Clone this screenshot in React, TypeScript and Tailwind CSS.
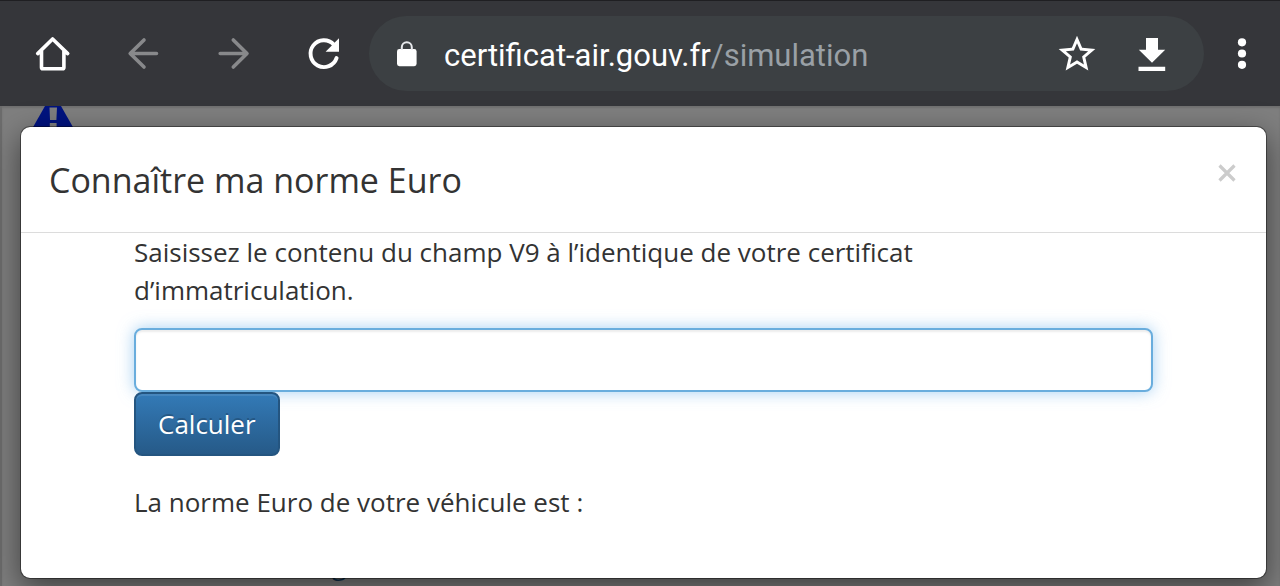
import type { ReactNode } from "react";
import { MdStarBorder } from "react-icons/md";

function ToolButton({ label, children, disabled }: { label: string; children: ReactNode; disabled?: boolean }) {
  return (
    <button
      type="button"
      aria-label={label}
      disabled={disabled}
      className="flex size-[45px] shrink-0 items-center justify-center text-white disabled:text-[#88898b]"
    >
      {children}
    </button>
  );
}

function Glyph({ children }: { children: ReactNode }) {
  return (
    <svg viewBox="0 0 45 45" className="size-[45px]" fill="none" stroke="currentColor" strokeWidth="3.6" strokeLinecap="round" strokeLinejoin="round" aria-hidden="true">
      {children}
    </svg>
  );
}

function BrowserBar() {
  return (
    <header className="flex items-center border-t border-[#1f1f22] bg-[#35363a] pt-[15px] pr-4 pb-[15px] pl-[30px]">
      <nav className="flex gap-[45px]" aria-label="Navigation">
        <ToolButton label="Accueil">
          <Glyph>
            <path d="M7.7 22.6 L22.6 8 L37.7 22.6 M11.5 20 V36.5 Q11.5 37.8 12.8 37.8 H32.6 Q33.9 37.8 33.9 36.5 V20" />
          </Glyph>
        </ToolButton>
        <ToolButton label="Précédent" disabled>
          <Glyph>
            <path d="M36.5 22.5 H10.5 M24 9 L10.2 22.5 L24 36" />
          </Glyph>
        </ToolButton>
        <ToolButton label="Suivant" disabled>
          <Glyph>
            <path d="M10.2 22.5 H36.5 M23.3 9 L37 22.5 L23.3 36" />
          </Glyph>
        </ToolButton>
        <ToolButton label="Actualiser">
          <Glyph>
            <path strokeWidth="3.9" d="M36.6 27 A13.4 13.4 0 1 1 33.8 13.6" />
            <path d="M39 7.3 V20.7 H25.6 Z" fill="currentColor" stroke="none" />
          </Glyph>
        </ToolButton>
      </nav>
      <div className="ml-6 flex h-[75px] min-w-0 flex-1 items-center rounded-full bg-[#3c4043] pr-[30px] pl-[27px]">
        <svg viewBox="0 0 22 28" className="h-7 w-[22px] shrink-0" aria-hidden="true">
          <rect x="1" y="9" width="19.6" height="17.2" rx="2.4" fill="#fff" />
          <path d="M5.8 10 V7.2 A5 5 0 0 1 15.8 7.2 V10" fill="none" stroke="#e8eaed" strokeWidth="2" />
        </svg>
        <p className="ml-[26px] min-w-0 flex-1 truncate pt-1 font-['Roboto',sans-serif] text-[31px] leading-10 text-[#9aa0a6]">
          <span className="text-white">certificat-air.gouv.fr</span>/simulation
        </p>
        <div className="flex gap-[30px]">
          <ToolButton label="Ajouter aux favoris">
            <MdStarBorder className="size-11" />
          </ToolButton>
          <ToolButton label="Télécharger">
            <svg viewBox="0 0 45 45" className="size-[45px]" fill="currentColor" aria-hidden="true">
              <path d="M17 7 H29 V18.7 H36.2 L23 31.8 L9.8 18.7 H17 Z M9.5 35.8 H36.2 V39.9 H9.5 Z" />
            </svg>
          </ToolButton>
        </div>
      </div>
      <div className="ml-[15px] flex">
        <ToolButton label="Menu">
          <svg viewBox="0 0 45 45" className="size-[45px]" fill="currentColor" aria-hidden="true">
            <circle cx="23" cy="11.3" r="4.1" />
            <circle cx="23" cy="22.5" r="4.1" />
            <circle cx="23" cy="33.8" r="4.1" />
          </svg>
        </ToolButton>
      </div>
    </header>
  );
}

function PageBehind() {
  return (
    <div className="col-start-1 row-start-1 flex flex-col justify-between border-l-2 border-[#6c6c6c] bg-[#7f7f7f] shadow-[inset_0_2px_2px_rgba(0,0,0,0.12)]" aria-hidden="true">
      <svg viewBox="0 0 42 23" className="ml-[30px] h-[23px] w-[42px]">
        <path d="M13 0 H29 L42 23 H0 Z" fill="#00137f" />
        <path d="M17.5 1.5 H25 L24.4 14 H18 Z M17.8 17 H24.6 V23 H17.8 Z" fill="#7f7f7f" />
      </svg>
      <p className="ml-[330px] pb-[3px] font-['Open_Sans',sans-serif] text-[26px] leading-9 text-[#0d2f4d]">g</p>
    </div>
  );
}

function NormDialog() {
  return (
    <section
      role="dialog"
      aria-labelledby="dialog-title"
      className="z-10 col-start-1 row-start-1 mt-5 mr-[13px] mb-[7px] ml-5 rounded-[10px] border border-black/40 bg-white bg-clip-padding font-['Open_Sans',sans-serif] text-[#333] shadow-[0_10px_30px_rgba(0,0,0,0.5)]"
    >
      <div className="flex items-start justify-between border-b border-[#dcdcdc] pt-[27px] pr-6 pb-[26px] pl-7">
        <h1 id="dialog-title" className="text-[34px] leading-[52px]">Connaître ma norme Euro</h1>
        <button type="button" aria-label="Fermer" className="mt-2 flex h-[22px] w-[30px] items-center justify-center text-[#ccc]">
          <svg viewBox="0 0 18 18" className="size-[18px]" stroke="currentColor" strokeWidth="3.2" aria-hidden="true">
            <path d="M1.5 1.5 L16.5 16.5 M16.5 1.5 L1.5 16.5" />
          </svg>
        </button>
      </div>
      <form className="px-[113px] pb-14 text-[26px] leading-[38px]" onSubmit={(event) => event.preventDefault()}>
        <label htmlFor="champ-v9" className="block max-w-[860px]">
          Saisissez le contenu du champ V9 à l’identique de votre certificat d’immatriculation.
        </label>
        <input
          id="champ-v9"
          type="text"
          className="mt-[19px] block h-16 w-full rounded-lg border-2 border-[#69addd] bg-white px-6 shadow-[inset_0_2px_2px_rgba(0,0,0,0.075),0_0_16px_rgba(102,175,233,0.6)] outline-none"
        />
        <button
          type="submit"
          className="relative block h-16 rounded-lg border-2 border-[#245580] bg-linear-to-b from-[#337ab7] to-[#265a88] px-[22px] text-white shadow-[inset_0_2px_0_rgba(255,255,255,0.1)] text-shadow-[0_-2px_0_rgba(0,0,0,0.2)]"
        >
          Calculer
        </button>
        <p className="mt-[27px]">La norme Euro de votre véhicule est :</p>
      </form>
    </section>
  );
}

export default function App() {
  return (
    <div className="flex min-h-screen flex-col bg-[#7f7f7f]">
      <BrowserBar />
      <main className="grid flex-1">
        <PageBehind />
        <NormDialog />
      </main>
    </div>
  );
}
